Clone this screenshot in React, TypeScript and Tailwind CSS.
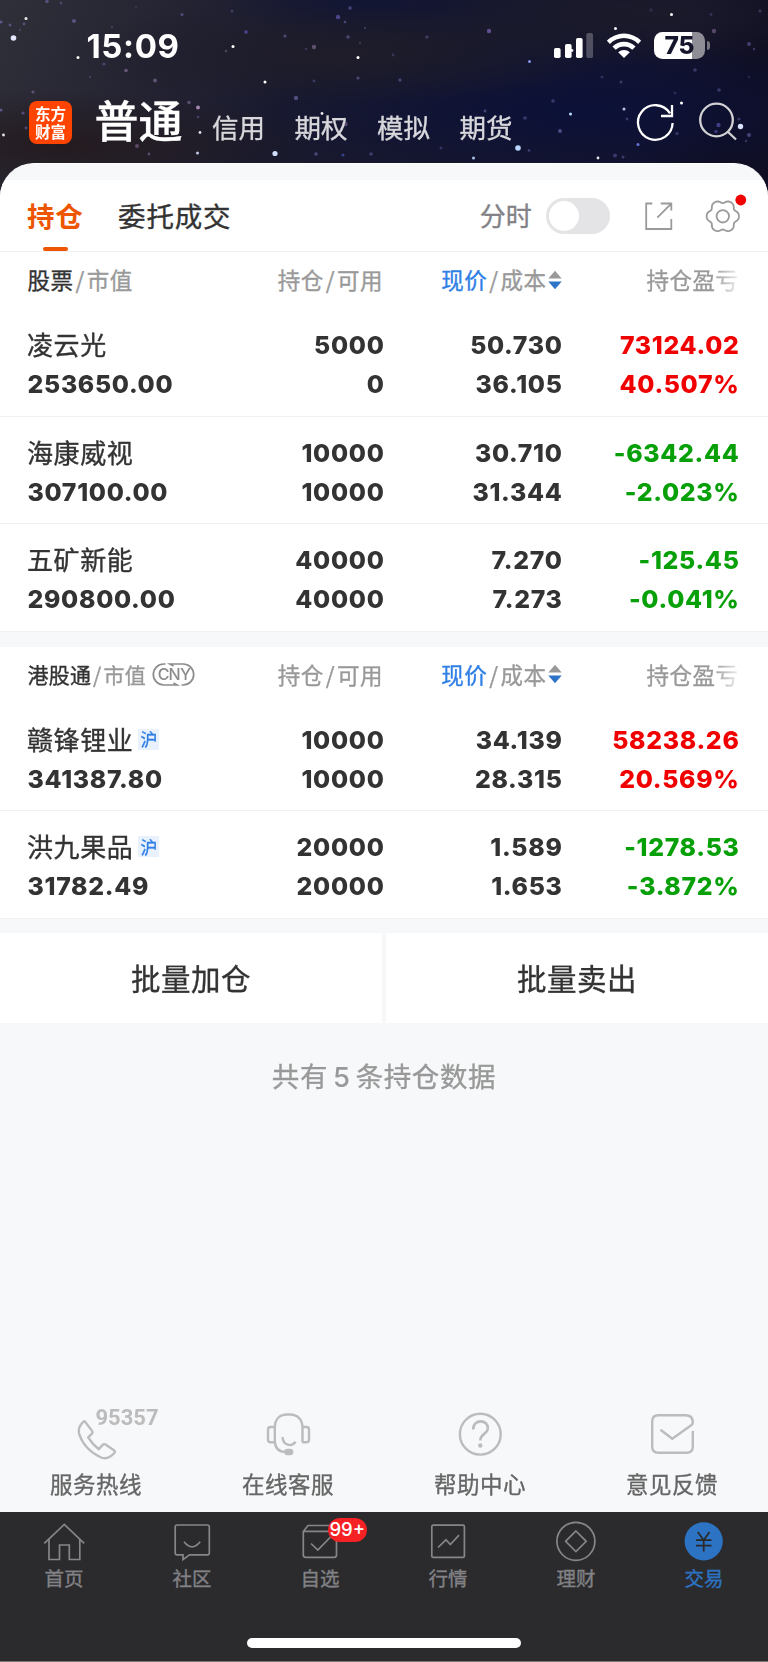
import React from "react";

const CJK = "font-['Noto_Sans_CJK_SC',sans-serif] [-webkit-text-stroke:0.35px_currentColor]";
const NUM = "font-['Inter','Noto_Sans_CJK_SC',sans-serif] [-webkit-text-stroke:0px]";

type Holding = {
  name: string;
  value: string;
  hold: string;
  avail: string;
  price: string;
  cost: string;
  profit: string;
  rate: string;
  up: boolean;
  tag?: string;
};

const aShares: Holding[] = [
  { name: "凌云光", value: "253650.00", hold: "5000", avail: "0", price: "50.730", cost: "36.105", profit: "73124.02", rate: "40.507%", up: true },
  { name: "海康威视", value: "307100.00", hold: "10000", avail: "10000", price: "30.710", cost: "31.344", profit: "-6342.44", rate: "-2.023%", up: false },
  { name: "五矿新能", value: "290800.00", hold: "40000", avail: "40000", price: "7.270", cost: "7.273", profit: "-125.45", rate: "-0.041%", up: false },
];

const hkShares: Holding[] = [
  { name: "赣锋锂业", tag: "沪", value: "341387.80", hold: "10000", avail: "10000", price: "34.139", cost: "28.315", profit: "58238.26", rate: "20.569%", up: true },
  { name: "洪九果品", tag: "沪", value: "31782.49", hold: "20000", avail: "20000", price: "1.589", cost: "1.653", profit: "-1278.53", rate: "-3.872%", up: false },
];

/* x, y, radius, opacity, colour */
const W = "#ffffff";
const P = "#7d76c0";
const M = "#957aac";
const stars: [number, number, number, number, string][] = [
  [13.5, 38, 2.8, 1, "#e4e6ff"], [26, 18.5, 1.5, 0.9, W], [10, 25, 1.5, 0.5, P], [24, 24, 1.4, 0.5, P], [20, 30, 1.2, 0.3, P],
  [74, 21, 2, 0.55, P], [78, 57.5, 1.5, 0.95, W], [126, 70.5, 1.8, 0.6, M], [104, 64, 1.6, 0.4, P], [155, 80.5, 2, 0.55, M],
  [33, 92, 1.6, 0.5, M], [233, 46.5, 1.5, 1, W], [226, 51, 1.3, 0.4, M], [246, 32, 1.7, 0.7, "#5b58c8"], [182, 14.5, 1.5, 0.5, P],
  [232, 11, 1.5, 0.35, P], [265, 82, 1.5, 1, W], [358, 57.5, 1.5, 1, W], [358, 78, 1.6, 0.5, P], [285, 36, 1.6, 0.5, P],
  [314, 47, 2.2, 0.55, M], [306, 49, 1.3, 0.3, P], [296, 98, 2.2, 0.55, P], [314, 81, 1.4, 0.35, P], [338, 17, 2.2, 0.6, "#6a62c8"],
  [350, 8, 1.7, 0.5, P], [345, 22, 1.3, 0.5, P], [348, 37, 1.8, 0.45, P], [365, 28, 1.2, 0.3, P], [360, 43, 1.2, 0.3, P],
  [189, 102.5, 1.8, 0.5, M], [198, 107.5, 2, 0.75, "#d0a8d8"], [198, 117, 1.3, 0.4, P], [200, 132.5, 1.4, 0.85, W], [197.5, 153, 1.5, 0.9, "#d4dcff"],
  [275, 153.5, 2.6, 1, "#cfe0ff"], [137, 146, 2, 0.5, M], [149, 154, 1.4, 0.5, M], [3.5, 135, 1.4, 0.9, W], [23, 113, 1.6, 0.5, P],
  [26, 128, 1.4, 0.5, P], [322, 113.5, 1.4, 0.9, W], [345, 124, 2.5, 0.5, M], [316, 154, 1.8, 0.5, P], [343, 155, 1.6, 0.6, "#4d5bc0"],
  [371, 154, 1.8, 0.4, P], [1, 22, 1.6, 0.6, P], [1, 110, 1.6, 0.6, P], [47, 1.5, 1.8, 0.5, P], [61, 3, 1.3, 0.4, P],
  [112, 27, 1.3, 0.3, P], [136, 7, 1.2, 0.2, P], [90, 77, 1.2, 0.3, P], [489, 31, 2.2, 0.65, "#8a68c8"], [427, 37, 1.6, 0.4, P],
  [671.5, 14.5, 1.5, 1, W], [615.5, 28.5, 1.5, 0.95, W], [714, 31, 2.2, 0.5, M], [749, 44, 2, 0.45, P], [754, 49, 1.2, 0.4, P],
  [572, 50.5, 1.4, 0.9, W], [529.5, 61.5, 1.5, 0.9, "#8ea2ff"], [400, 80, 1.7, 0.45, P], [393, 55, 1.4, 0.3, P], [553, 101, 1.8, 0.4, P],
  [570.5, 114, 1.5, 1, "#b8dcff"], [560, 131, 1.9, 0.6, P], [525, 118, 1.8, 0.4, P], [485, 111, 1.4, 0.5, P], [624, 109, 1.5, 0.9, "#d0d8ff"],
  [681.5, 103, 1.5, 1, W], [719, 90, 1.8, 0.4, P], [695, 70, 1.8, 0.4, P], [621, 82, 1.5, 0.4, P], [602, 77, 1.5, 0.3, P],
  [675, 93, 1.3, 0.3, P], [740.5, 126.5, 2.7, 1, "#d8e2ff"], [749, 135, 2, 0.5, P], [746, 141, 1.4, 0.3, P], [718.5, 125, 2.2, 0.6, "#6258c0"],
  [716, 131.5, 1.8, 0.5, "#6258c0"], [739, 119, 1.6, 0.4, P], [638, 144.5, 1.5, 0.9, "#6f82f0"], [677, 133.5, 1.7, 0.35, P], [627, 119, 1.4, 0.4, P],
  [518, 148, 2.8, 1, "#b8d4ff"], [529, 150.5, 1.4, 0.4, P], [441, 148, 1.5, 0.3, P], [473.5, 158, 1.5, 0.9, "#b8d8ff"], [598, 158, 1.4, 0.9, W],
  [615, 155.5, 1.9, 0.4, P], [623, 157, 1.5, 0.4, P], [760, 11, 1.6, 0.35, P], [711, 14.5, 1.4, 0.3, P], [651, 10, 1.8, 0.2, P], [749, 77, 1.4, 0.2, P],
];

function StarField() {
  return (
    <svg className="absolute inset-0 h-[212px] w-full" viewBox="0 0 768 212" preserveAspectRatio="none">
      <defs>
        <linearGradient id="sky" x1="0" y1="0" x2="1" y2="0.12">
          <stop offset="0" stopColor="#2f2f39" />
          <stop offset="0.2" stopColor="#262533" />
          <stop offset="0.42" stopColor="#191a2f" />
          <stop offset="0.7" stopColor="#15162d" />
          <stop offset="0.9" stopColor="#13132c" />
          <stop offset="1" stopColor="#0f0e22" />
        </linearGradient>
        <radialGradient id="blue">
          <stop offset="0" stopColor="#0c1138" />
          <stop offset="1" stopColor="#0c1138" stopOpacity="0" />
        </radialGradient>
        <radialGradient id="warm">
          <stop offset="0" stopColor="#231a1e" stopOpacity="0.95" />
          <stop offset="1" stopColor="#231a1e" stopOpacity="0" />
        </radialGradient>
        <radialGradient id="haze">
          <stop offset="0" stopColor="#1f1d29" />
          <stop offset="1" stopColor="#1f1d29" stopOpacity="0" />
        </radialGradient>
        <filter id="soft" x="-0.1" y="-0.1" width="1.2" height="1.2">
          <feGaussianBlur stdDeviation="0.6" />
        </filter>
      </defs>
      <rect width="768" height="212" fill="url(#sky)" />
      <ellipse cx="580" cy="110" rx="330" ry="75" fill="url(#blue)" />
      <ellipse cx="370" cy="0" rx="160" ry="40" fill="url(#blue)" opacity="0.5" />
      <ellipse cx="60" cy="145" rx="260" ry="55" fill="url(#warm)" />
      <ellipse cx="330" cy="55" rx="280" ry="50" fill="url(#haze)" />
      <ellipse cx="650" cy="15" rx="220" ry="50" fill="url(#haze)" opacity="0.7" />
      <g filter="url(#soft)">
        {stars.map(([x, y, r, o, c], i) => (
          <circle key={i} cx={x} cy={y} r={r} fill={c} opacity={o} />
        ))}
      </g>
    </svg>
  );
}

function StatusBar() {
  return (
    <div className="relative flex h-[92px] items-start justify-between pl-[86.5px] pr-[58px]">
      <span className={`${NUM} mt-[25.5px] text-[33px] font-bold leading-10 tracking-[0.6px] text-white`}>15:09</span>
      <div className="mt-[32px] flex items-start">
        <svg width="40" height="27" viewBox="553 32 40 27" fill="#fff">
          <rect x="553" y="48" width="6.6" height="10" rx="1.8" />
          <rect x="564" y="44" width="6.6" height="14" rx="1.8" />
          <rect x="575" y="38" width="6.6" height="20" rx="1.8" />
          <rect x="585.3" y="33" width="6.7" height="25" rx="1.8" opacity="0.25" />
        </svg>
        <svg className="ml-[12.5px]" width="34" height="27" viewBox="606 32 34 27" fill="#fff">
          <path d="M605.8 40.6a24.6 24.6 0 0 1 34.4 0l-3.1 3.3a20 20 0 0 0-28.2 0z" />
          <path d="M611.4 46.4a16.6 16.6 0 0 1 23.2 0l-3.3 3.4a11.8 11.8 0 0 0-16.6 0z" />
          <path d="M617.2 52.3a8.4 8.4 0 0 1 11.6 0L623 58.1z" />
        </svg>
        <div className="ml-[13.5px] flex items-center">
          <div className="flex h-[27px] w-[51px] items-center justify-center rounded-[8.5px] bg-[linear-gradient(90deg,#fff_75%,#8f8e97_75%)]">
            <span className={`${NUM} text-[24.5px] font-extrabold leading-[27px] text-[#15152b]`}>75</span>
          </div>
          <div className="ml-[1.5px] h-[9px] w-[3.5px] rounded-r-full bg-[#77767f]" />
        </div>
      </div>
    </div>
  );
}

function Header() {
  return (
    <header className="relative h-[212px]">
      <StarField />
      <StatusBar />
      <div className="relative flex h-[60px] items-start pl-[29px] pr-[29px]">
        <div className={`${CJK} mt-[9px] flex h-[43px] w-[43px] items-center justify-center rounded-[8px] bg-[#ff4400] text-[15.5px] font-bold leading-[18px] text-white [-webkit-text-stroke:0px]`}>
          <span className="-mt-[1px]">
            东方
            <br />
            财富
          </span>
        </div>
        <span className={`${CJK} -mt-[3px] ml-[22.5px] text-[44px] font-medium leading-[60px] text-white [-webkit-text-stroke:0.6px_#fff]`}>普通</span>
        <nav className={`${CJK} ml-[29.5px] flex gap-[29.5px] pt-[5px] text-[26.5px] font-normal leading-[60px] text-[#d8d8dc]`}>
          <span>信用</span>
          <span>期权</span>
          <span>模拟</span>
          <span>期货</span>
        </nav>
        <svg className="ml-auto mt-[10px]" width="104" height="42" viewBox="635 102 104 42" fill="none" strokeWidth="2.3">
          <path stroke="#fff" d="M672.6 123a17.3 17.3 0 1 1-2.6-9.6M672 105v11h-11" />
          <g stroke="#d2d2d4">
            <circle cx="716.5" cy="120" r="16.3" />
            <path d="M727.5 131.5l8.5 8" />
          </g>
        </svg>
      </div>
    </header>
  );
}

function gearPath(cx: number, cy: number) {
  const pts: string[] = [];
  for (let i = 0; i < 120; i++) {
    const t = (i / 120) * Math.PI * 2;
    const r = 14.9 + 1.5 * Math.cos(6 * t) - 0.3 * Math.cos(12 * t);
    pts.push(`${(cx + r * Math.cos(t)).toFixed(2)} ${(cy + r * Math.sin(t)).toFixed(2)}`);
  }
  return `M${pts.join("L")}Z`;
}

function Tabs() {
  return (
    <div className="flex h-[72px] items-start border-b border-[#f0f1f3] bg-white pl-[27px]">
      <div className="flex h-[71px] flex-col items-center">
        <span className={`${CJK} h-[66.5px] text-[27.5px] font-bold leading-[70px] tracking-[0.8px] text-[#ee5500] [-webkit-text-stroke:0px]`}>持仓</span>
        <i className="h-[4.5px] w-[25px] rounded-[2px] bg-[#ee5500]" />
      </div>
      <span className={`${CJK} ml-[34.5px] text-[27.5px] leading-[70px] tracking-[0.8px] text-[#333]`}>委托成交</span>
      <span className={`${CJK} ml-[248.5px] text-[26px] leading-[70px] text-[#828287]`}>分时</span>
      <div className="ml-[14px] mt-[18px] h-9 w-[64.5px] rounded-full bg-[#e4e4e6] p-[3.2px]">
        <div className="h-[29.6px] w-[29.6px] rounded-full bg-white" />
      </div>
      <svg className="ml-[34px] mt-[20px]" width="30" height="32" viewBox="644 200 30 32" fill="none" stroke="#9a9a9a" strokeWidth="1.8">
        <path d="M652.3 203.5H646.2V229H671.3V219M660.8 203.5H671.3V210.5M671 203.8L657.3 217.6" />
      </svg>
      <svg className="ml-[30px] mt-[10px]" width="46" height="46" viewBox="704 190 46 46" fill="none" stroke="#9a9a9a" strokeWidth="1.8">
        <path d={gearPath(722.8, 216.3)} />
        <circle cx="722.8" cy="216.3" r="6.2" />
        <circle cx="740.8" cy="200" r="5.4" fill="#f00000" stroke="none" />
      </svg>
    </div>
  );
}

function CnyBadge() {
  return (
    <span className="relative ml-[6.5px] flex h-[23px] w-[43px] items-center justify-center">
      <svg className="absolute inset-0" width="43" height="23" viewBox="0 0 43 23" fill="none" stroke="#8c8c8c" strokeWidth="1.7">
        <path d="M13.5 1H11.8a10.3 10.3 0 0 0 0 21H25l-3.5-2M29.5 22H31.2a10.3 10.3 0 0 0 0-21H18l3.5 2" />
      </svg>
      <span className={`${NUM} text-[16px] font-medium leading-[23px] tracking-[-0.8px] text-[#8c8c8c]`}>CNY</span>
    </span>
  );
}

function SortIcon() {
  return (
    <svg className="ml-[1px]" width="14" height="20" viewBox="0 0 14 20">
      <path d="M0.3 8.5L7 0.8L13.7 8.5Z" fill="#999" />
      <path d="M0.3 11.5L7 19.2L13.7 11.5Z" fill="#2d74c6" />
    </svg>
  );
}

const COLS = "grid grid-cols-[178px_177px_178px_177px] pl-7 pr-[30px]";

function Slash() {
  return <span className="mx-[2px]">/</span>;
}

function TableHead({ title, small }: { title: string; small?: boolean }) {
  return (
    <div className={`${COLS} ${CJK} h-[57px] items-center text-[22.5px] leading-[55px] tracking-[0.5px] text-[#999]`}>
      <div className={`-ml-[0.5px] -mt-[2px] flex items-center whitespace-nowrap ${small ? "text-[21px] tracking-[0.2px]" : ""}`}>
        <span className="text-[#333]">{title}</span>
        <Slash />
        <span>市值</span>
        {small && <CnyBadge />}
      </div>
      <div className="-mt-[2px] flex justify-end">
        持仓
        <Slash />
        可用
      </div>
      <div className="-mr-[0.5px] -mt-[2px] flex items-center justify-end">
        <span className="text-[#2f7fe6]">现价</span>
        <Slash />
        成本
        <SortIcon />
      </div>
      <div className="-mr-[0.5px] -mt-[2px] flex justify-end">
        <span className="[mask-image:linear-gradient(90deg,#000_72%,rgba(0,0,0,0.15)_100%)]">持仓盈亏</span>
      </div>
    </div>
  );
}

const FIGURE = "text-[24.8px] font-extrabold leading-[39px] tracking-[0.7px]";

function Pair({ a, b, color }: { a: string; b: string; color: string }) {
  return (
    <div className={`${NUM} ${FIGURE} -mr-[1.5px] flex flex-col items-end ${color}`}>
      <span>{a}</span>
      <span>{b}</span>
    </div>
  );
}

function Row({ h }: { h: Holding }) {
  return (
    <div className={`${COLS} h-[107.6px] border-b border-[#f0f1f3] pt-[17px]`}>
      <div className="flex flex-col">
        <div className="flex h-[39px] items-center pb-[3px]">
          <span className={`${CJK} -ml-[1px] text-[26px] leading-[36px] tracking-[0.6px] text-[#333]`}>{h.name}</span>
          {h.tag && (
            <span className={`${CJK} ml-[5px] mt-[1px] flex h-[21px] w-[21px] items-center justify-center bg-[#e8f1fc] text-[17px] leading-[20px] text-[#2f7fe6]`}>{h.tag}</span>
          )}
        </div>
        <span className={`${NUM} ${FIGURE} -ml-[0.5px] text-[#333]`}>{h.value}</span>
      </div>
      <Pair a={h.hold} b={h.avail} color="text-[#333]" />
      <Pair a={h.price} b={h.cost} color="text-[#333]" />
      <Pair a={h.profit} b={h.rate} color={h.up ? "text-[#f00000]" : "text-[#08a008]"} />
    </div>
  );
}

const services: { label: string; icon: React.ReactNode }[] = [
  {
    label: "服务热线",
    icon: (
      <svg width="96" height="56" viewBox="48 1404 96 56" className="overflow-visible" fill="none" stroke="#bcbcbc" strokeWidth="2.4" strokeLinejoin="round">
        <path d="M85 1421.6L92.4 1431.4Q93 1432.6 92 1433.6L88.2 1437.4Q92.5 1444.5 98.8 1449.2L102.6 1444.9Q104 1443.6 105.5 1444.5L114.3 1450.6Q115.5 1451.7 114.3 1453Q108 1460.2 101 1457.5Q84 1449.5 79 1433.5Q77.6 1427 83.6 1421.6Q84.4 1421 85 1421.6Z" />
        <text x="95.5" y="1425" fill="#bcbcbc" stroke="none" fontSize="22" fontWeight="700" fontFamily="Roboto, sans-serif" textLength="63">95357</text>
      </svg>
    ),
  },
  {
    label: "在线客服",
    icon: (
      <svg width="96" height="56" viewBox="240 1404 96 56" fill="none" stroke="#bcbcbc" strokeWidth="2.4">
        <path d="M274.8 1442.5V1428C274.8 1419 280 1414.5 287 1414.5H290C297 1414.5 302.5 1419 302.5 1428V1442.5" />
        <path d="M274.8 1427H270.5Q268 1427 268 1430V1439.5Q268 1442.3 270.5 1442.3H274.8M302.5 1427H306.5Q309 1427 309 1430V1439.5Q309 1442.3 306.5 1442.3H302.5" />
        <path d="M282.5 1437C283 1445.5 291.5 1447.5 295.5 1441.8M274.8 1441C275 1448.5 279.5 1452 286 1452" />
        <rect x="284.3" y="1448.7" width="9" height="6.6" rx="3" fill="#bcbcbc" stroke="none" />
      </svg>
    ),
  },
  {
    label: "帮助中心",
    icon: (
      <svg width="96" height="56" viewBox="432 1404 96 56" fill="none" stroke="#bcbcbc" strokeWidth="2.4">
        <circle cx="480.3" cy="1434.2" r="20.4" />
        <path d="M473.2 1429.5C472.8 1418.5 488.8 1419 487.8 1429C487 1434.5 480.3 1433.5 480.3 1440.5" strokeWidth="2.6" />
        <circle cx="480.3" cy="1445.5" r="2.2" fill="#bcbcbc" stroke="none" />
      </svg>
    ),
  },
  {
    label: "意见反馈",
    icon: (
      <svg width="96" height="56" viewBox="624 1404 96 56" fill="none" stroke="#bcbcbc" strokeWidth="2.4">
        <path d="M692.8 1431V1446.5Q692.8 1452.7 686.5 1452.7H658.5Q652.2 1452.7 652.2 1446.5V1421.5Q652.2 1415.3 658.5 1415.3H685.5Q692.8 1415.3 692.8 1422.5Q692.8 1424 691.5 1425L672.3 1438.7L660.5 1429.7" />
      </svg>
    ),
  },
];

const navItems: { label: string; active?: boolean; icon: React.ReactNode }[] = [
  { label: "首页", icon: <path d="M44.3 1543.3L64.3 1524.5L84.2 1543.3M49 1539.5V1559.5H59.5V1545H69.3V1559.5H79.8V1539.5" /> },
  {
    label: "社区",
    icon: <path d="M177 1525H207.5Q209.3 1525 209.3 1526.8V1553Q209.3 1554.8 207.5 1554.8H189.5L183 1559.6V1554.8H177Q175.2 1554.8 175.2 1553V1526.8Q175.2 1525 177 1525ZM184 1541.8Q192 1551.8 200.2 1541.8" />,
  },
  {
    label: "自选",
    icon: <path d="M303.3 1531.5L308 1525.5H332L336.5 1531.5V1555Q336.5 1557.3 334.2 1557.3H305.6Q303.3 1557.3 303.3 1555ZM303.3 1531.3H336.5M311 1543.5L317.8 1550L331 1536.5" />,
  },
  {
    label: "行情",
    icon: (
      <>
        <rect x="431.8" y="1525.2" width="32.6" height="32.2" rx="1.5" />
        <path d="M438 1547.5L446 1539.8L450.3 1544.5L459 1535.2" />
      </>
    ),
  },
  {
    label: "理财",
    icon: (
      <>
        <circle cx="575.9" cy="1541.3" r="19" />
        <path d="M575.9 1531L586.2 1541.3L575.9 1551.6L565.6 1541.3Z" />
      </>
    ),
  },
  {
    label: "交易",
    active: true,
    icon: (
      <>
        <circle cx="703.7" cy="1541.3" r="19.1" fill="#2d73c4" stroke="none" />
        <path d="M697.8 1532L703.7 1540.3L709.5 1532M703.7 1540V1551.5M696 1540.2H711.5M696 1545.7H711.5" stroke="#2a2a2c" strokeWidth="1.8" />
      </>
    ),
  },
];

function BottomNav() {
  return (
    <nav className="h-[150px] border-b border-[#77777a] bg-[#2b2b2d]">
      <div className="grid h-[126px] grid-cols-6 items-start">
        {navItems.map((n, i) => (
          <div key={n.label} className="relative flex flex-col items-center pt-[8px]">
            <svg width="44" height="44" viewBox={`${64 + i * 128 - 22} 1520 44 44`} fill="none" stroke="#86868a" strokeWidth="1.7">
              {n.icon}
            </svg>
            <span className={`${CJK} text-[19.5px] leading-[28px] [-webkit-text-stroke:0.2px_currentColor] ${n.active ? "text-[#2d73c4]" : "text-[#828286]"}`}>{n.label}</span>
            {i === 2 && (
              <span className={`${NUM} absolute left-[71.5px] top-[6px] flex h-[23.5px] w-[39.5px] items-center justify-center rounded-full bg-[#f52225] text-[18.5px] font-medium text-white`}>
                99+
              </span>
            )}
          </div>
        ))}
      </div>
      <div className="mx-auto h-[9.5px] w-[274px] rounded-full bg-white" />
    </nav>
  );
}

export default function App() {
  return (
    <div className="flex h-[1662px] w-[768px] flex-col overflow-hidden bg-[#f7f8fa]">
      <Header />
      <main className="relative -mt-[49px] flex flex-1 flex-col overflow-hidden rounded-t-[34px] border-t border-white bg-[#f7f8fa] pt-4">
        <Tabs />
        <section className="bg-white">
          <TableHead title="股票" />
          {aShares.map((h) => (
            <Row key={h.name} h={h} />
          ))}
        </section>
        <section className="mt-[15px] bg-white">
          <TableHead title="港股通" small />
          {hkShares.map((h) => (
            <Row key={h.name} h={h} />
          ))}
        </section>
        <div className={`${CJK} mt-[14px] grid h-[90px] grid-cols-2 gap-1 text-center text-[29.5px] leading-[88px] tracking-[0.5px] text-[#333]`}>
          <button className="bg-white pb-[2px]">批量加仓</button>
          <button className="bg-white pb-[2px]">批量卖出</button>
        </div>
        <p className={`${CJK} mt-[32.5px] text-center text-[27.5px] leading-[40px] tracking-[0.6px] text-[#999]`}>
          共有<span className={`${NUM} mx-[5px] font-medium`}>5</span>条持仓数据
        </p>
        <div className="mt-auto grid h-[108px] grid-cols-4">
          {services.map((s) => (
            <div key={s.label} className="flex flex-col items-center">
              {s.icon}
              <span className={`${CJK} mt-[3px] text-[22.5px] leading-[40px] tracking-[0.5px] text-[#666]`}>{s.label}</span>
            </div>
          ))}
        </div>
      </main>
      <BottomNav />
    </div>
  );
}
